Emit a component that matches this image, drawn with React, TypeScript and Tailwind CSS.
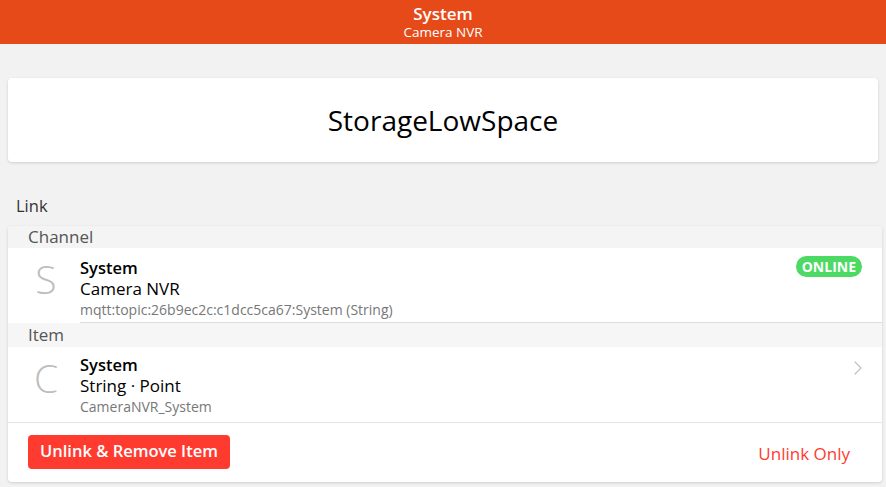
import { ChevronRight } from "lucide-react";

const FONT = { fontFamily: '"Open Sans", "Noto Sans", sans-serif' };

function LinkRow({
  letter,
  title,
  subtitle,
  footer,
  badge,
  chevron,
  divider,
  padTop,
}: {
  letter: string;
  title: string;
  subtitle: string;
  footer: string;
  badge?: string;
  chevron?: boolean;
  divider?: boolean;
  padTop: string;
}) {
  return (
    <div className="flex h-[75px] bg-white">
      <div className="flex w-[72px] shrink-0 justify-center pl-[4px] pt-[11px]">
        <span className="text-[39px] font-light leading-none text-[#bdbdbd]">{letter}</span>
      </div>
      <div className={`flex flex-1 items-start pr-[20px] ${padTop} ${divider ? "border-b border-[#dcdcdc]" : ""}`}>
        <div className="flex flex-1 flex-col">
          <span className="text-[16.5px] font-semibold leading-[21px] text-black">{title}</span>
          <span className="text-[17px] leading-[22px] text-black">{subtitle}</span>
          <span className="text-[14px] leading-[19px] text-[#777]">{footer}</span>
        </div>
        {badge && (
          <span className="mt-[-1px] rounded-full bg-[#4cd964] px-[6px] text-[14px] font-bold leading-[21px] text-white">
            {badge}
          </span>
        )}
        {chevron && (
          <ChevronRight size={24} strokeWidth={1.3} className="mr-[-8px] mt-[2px] text-[#c2c2c8]" />
        )}
      </div>
    </div>
  );
}

export default function App() {
  return (
    <div className="min-h-[487px] bg-[#f2f2f2]" style={FONT}>
      <header className="flex h-[44px] flex-col items-center justify-center bg-[#e64a19] text-white">
        <span className="text-[17px] font-semibold leading-[20px]">System</span>
        <span className="text-[13.5px] leading-[17px]">Camera NVR</span>
      </header>

      <div className="mx-[8px] mt-[34px] flex h-[84px] items-center justify-center rounded-[4px] bg-white shadow-[0_1px_3px_rgba(0,0,0,0.15)]">
        <span className="text-[28px] text-black">StorageLowSpace</span>
      </div>

      <div className="mt-[33px] px-[16px] text-[16.5px] leading-[22px] text-[#333]">Link</div>

      <div className="mx-[8px] mt-[9px] mr-[4px] overflow-hidden rounded-[4px] bg-white shadow-[0_1px_3px_rgba(0,0,0,0.15)]">
        <div className="h-[22px] bg-[#f4f4f4] px-[20px] text-[17px] leading-[22px] text-[#555]">Channel</div>
        <LinkRow
          letter="S"
          title="System"
          subtitle="Camera NVR"
          footer="mqtt:topic:26b9ec2c:c1dcc5ca67:System (String)"
          badge="ONLINE"
          divider
          padTop="pt-[9px]"
        />
        <div className="h-[24px] bg-[#f6f6f6] px-[20px] text-[17px] leading-[24px] text-[#555]">Item</div>
        <LinkRow
          letter="C"
          title="System"
          subtitle="String · Point"
          footer="CameraNVR_System"
          chevron
          padTop="pt-[7px]"
        />
        <div className="flex h-[60px] items-center justify-between border-t border-[#e5e5e5] px-[20px] pb-[2px]">
          <button className="h-[34px] rounded-[4px] bg-[#ff3b30] px-[12px] text-[16.5px] font-semibold text-white">
            Unlink &amp; Remove Item
          </button>
          <button className="px-[12px] pt-[4px] text-[17px] font-medium text-[#ff3b30]">Unlink Only</button>
        </div>
      </div>
    </div>
  );
}
